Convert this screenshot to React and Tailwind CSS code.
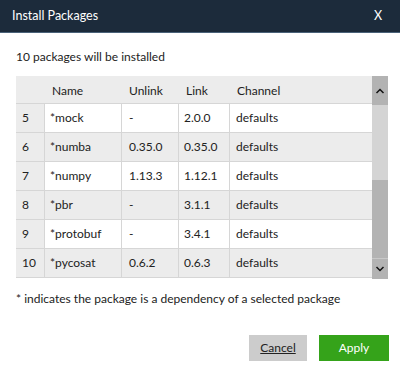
import React from "react";

const rows = [
  ["5", "*mock", "-", "2.0.0", "defaults"],
  ["6", "*numba", "0.35.0", "0.35.0", "defaults"],
  ["7", "*numpy", "1.13.3", "1.12.1", "defaults"],
  ["8", "*pbr", "-", "3.1.1", "defaults"],
  ["9", "*protobuf", "-", "3.4.1", "defaults"],
  ["10", "*pycosat", "0.6.2", "0.6.3", "defaults"],
];

export default function App() {
  return (
    <div
      className="w-[400px] h-[384px] bg-white flex flex-col text-[12px] text-[#222]"
      style={{ fontFamily: 'Lato, "Open Sans", sans-serif' }}
    >
      <div className="h-[33px] bg-[#1c2b3b] border-b border-[#4a6279] flex items-center justify-between pl-[12px] pr-[18px] text-white text-[12.5px]">
        <span>Install Packages</span>
        <span>X</span>
      </div>
      <div className="pl-[16px] pt-[15px] h-[43px]">10 packages will be installed</div>
      <div className="ml-[16px] w-[372px] h-[203px] flex">
        <div className="flex-1 flex flex-col">
          <div className="h-[28px] flex bg-[#ececec] border-b border-[#d6d6d6] pt-[2px]">
            <div className="w-[28px]"></div>
            <div className="w-[77px] pl-[8px] flex items-center">Name</div>
            <div className="w-[57px] pl-[8px] flex items-center">Unlink</div>
            <div className="w-[51px] pl-[8px] flex items-center">Link</div>
            <div className="flex-1 pl-[8px] flex items-center">Channel</div>
          </div>
          {rows.map((r, i) => {
            const bg = i % 2 === 0 ? "bg-white" : "bg-[#ececec]";
            return (
              <div key={r[0]} className="h-[29px] flex border-b border-[#d6d6d6]">
                <div className="w-[28px] bg-[#ececec] flex items-center pl-[6px]">{r[0]}</div>
                <div className={`w-[77px] ${bg} border-l border-[#d6d6d6] pl-[5px] flex items-center`}>{r[1]}</div>
                <div className={`w-[57px] ${bg} border-l border-[#d6d6d6] pl-[7px] flex items-center`}>{r[2]}</div>
                <div className={`w-[51px] ${bg} border-l border-[#d6d6d6] pl-[5px] flex items-center`}>{r[3]}</div>
                <div className={`flex-1 ${bg} border-l border-[#d6d6d6] pl-[6px] flex items-center`}>{r[4]}</div>
              </div>
            );
          })}
        </div>
        <div className="w-[16px] flex flex-col bg-[#d4d4d4]">
          <div className="h-[29px] bg-[#b3b3b3] flex items-center justify-center">
            <svg width="10" height="6" viewBox="0 0 10 6"><path d="M1.5 5 L5 1.5 L8.5 5" stroke="#111" strokeWidth="1.5" fill="none" /></svg>
          </div>
          <div className="h-[75px]"></div>
          <div className="flex-1 bg-[#b3b3b3]"></div>
          <div className="h-[21px] bg-[#b3b3b3] border-t border-[#c8c8c8] flex items-center justify-center">
            <svg width="10" height="6" viewBox="0 0 10 6"><path d="M1.5 1 L5 4.5 L8.5 1" stroke="#111" strokeWidth="1.5" fill="none" /></svg>
          </div>
        </div>
      </div>
      <div className="pl-[16px] pt-[11px]">* indicates the package is a dependency of a selected package</div>
      <div className="flex justify-end gap-[12px] pr-[11px] mt-[27px]">
        <button className="w-[58px] h-[26px] bg-[#cccccc] underline text-[#222]">Cancel</button>
        <button className="w-[70px] h-[26px] bg-[#35a31a] text-white">Apply</button>
      </div>
    </div>
  );
}
